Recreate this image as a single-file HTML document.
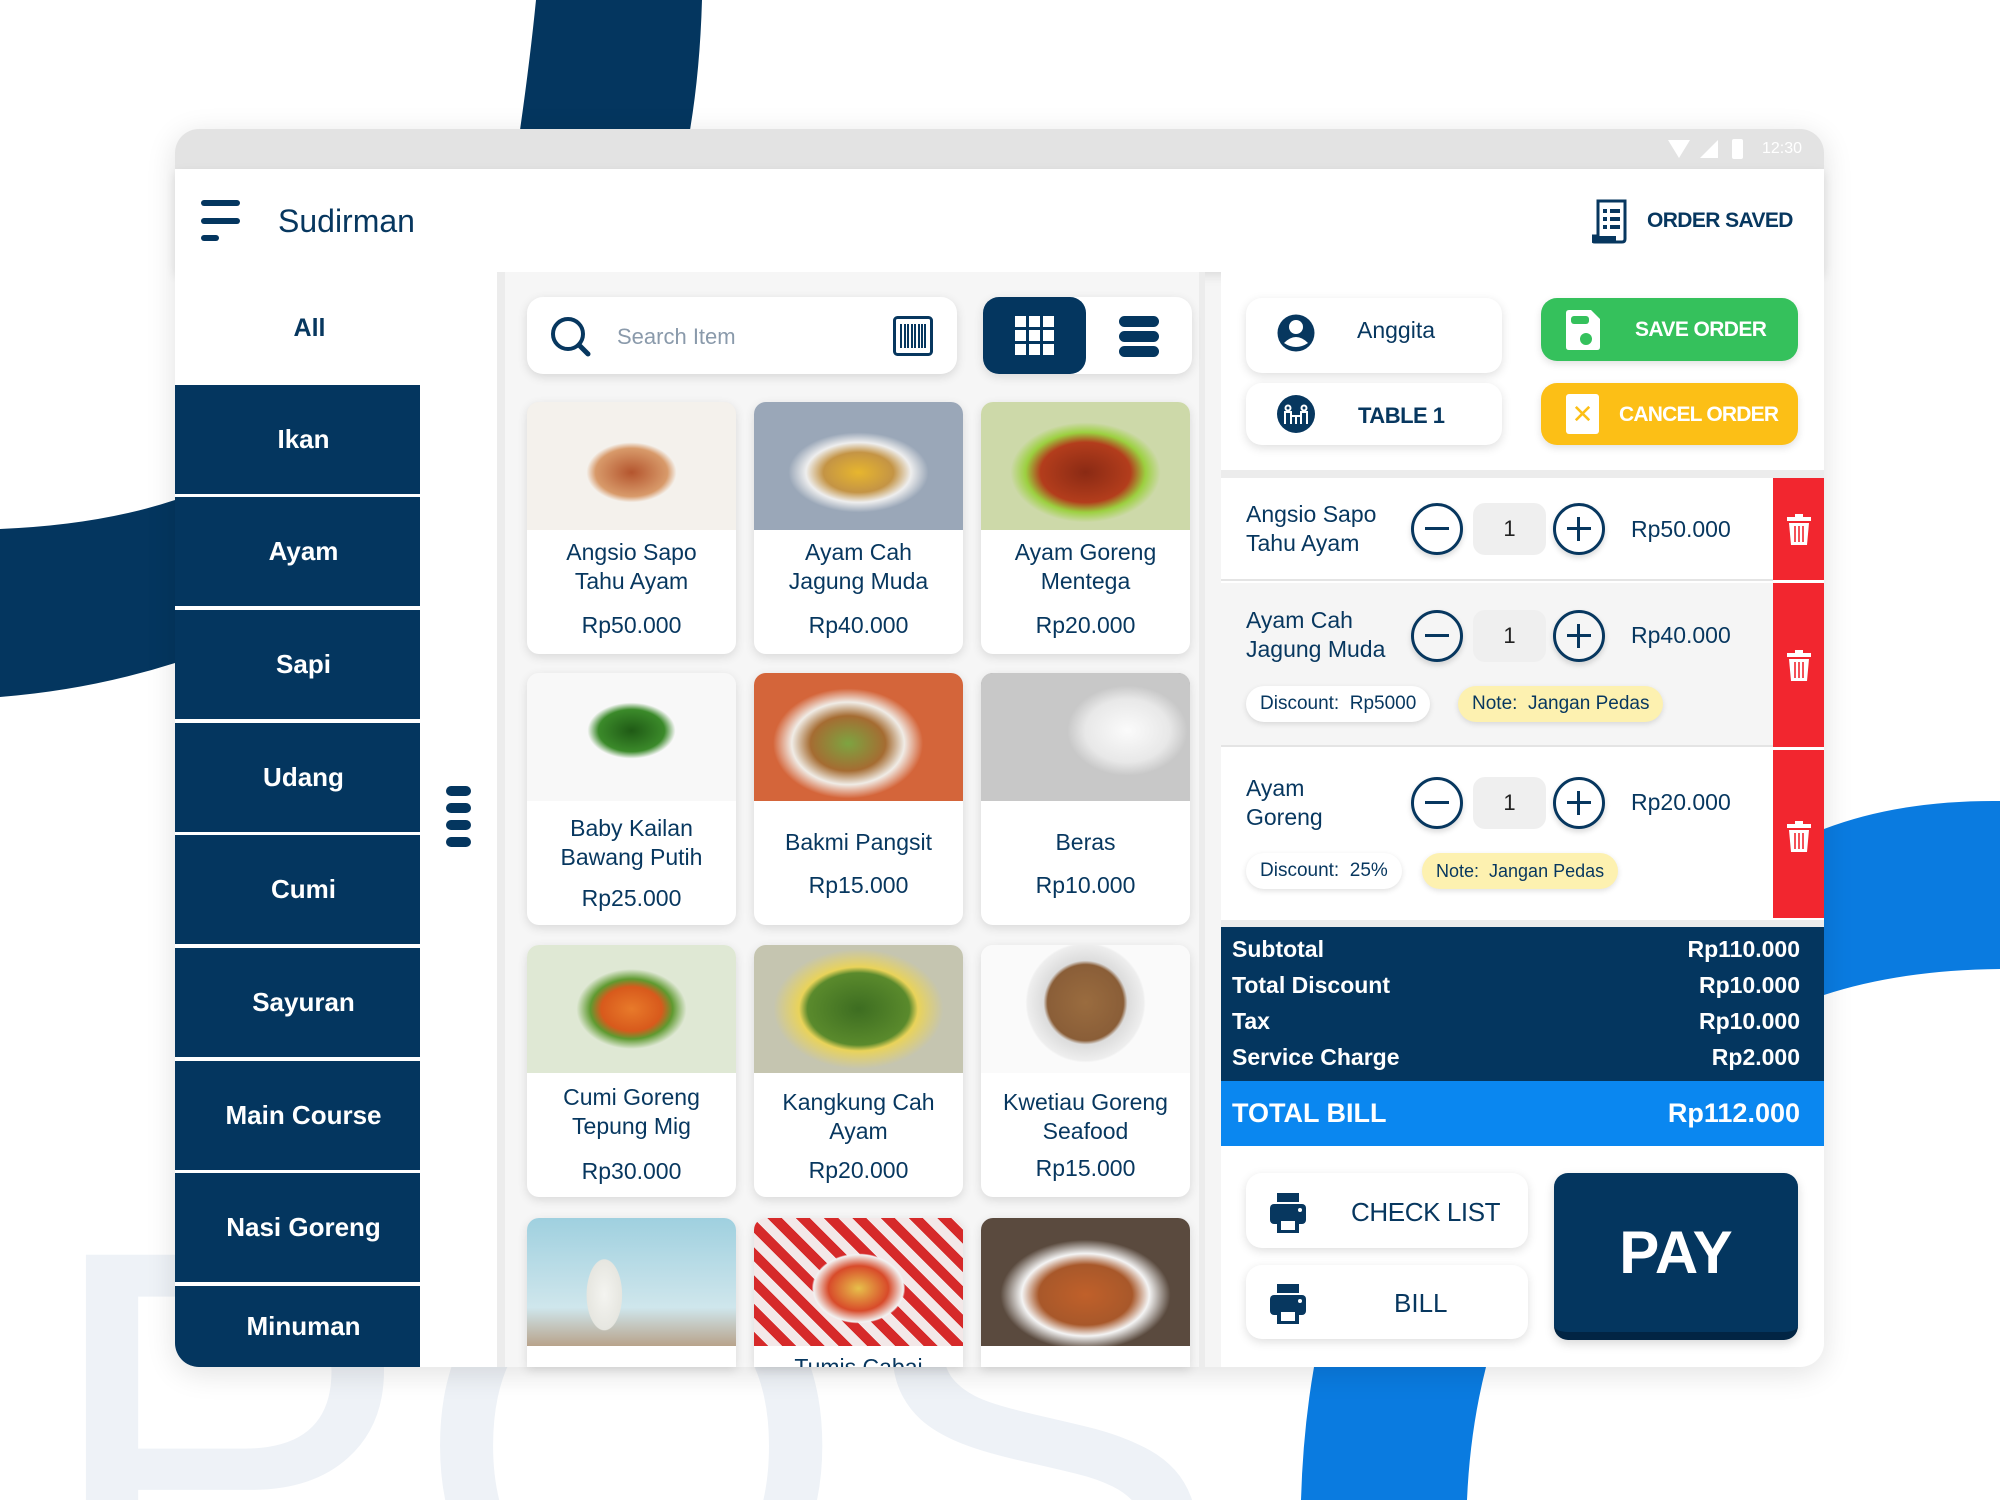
<!DOCTYPE html>
<html><head><meta charset="utf-8"><style>
*{box-sizing:border-box;margin:0;padding:0}
html,body{width:2000px;height:1500px;overflow:hidden}
body{position:relative;background:#fff;font-family:"Liberation Sans",sans-serif;color:#07375f}
.a{position:absolute}
.navy{background:#04365f}
.card{position:absolute;background:#fff;border-radius:12px;box-shadow:0 3px 10px rgba(0,0,0,.12);overflow:hidden;width:209px;height:252px}
.card .img{height:128px}
.card .t{position:absolute;left:0;right:0;text-align:center;font-size:23px;line-height:29px;color:#07375f}
.cat{position:absolute;left:175px;width:245px;height:109px;background:#04365f;color:#fff;font-size:26px;font-weight:bold;display:flex;align-items:center;justify-content:center;padding-left:12px}
.btn{position:absolute;background:#fff;border-radius:16px;box-shadow:0 3px 10px rgba(0,0,0,.13);display:flex;align-items:center}
.circ{position:absolute;width:52px;height:52px;border:3px solid #07375f;border-radius:50%;box-shadow:0 3px 6px rgba(0,0,0,.15)}
.circ:before{content:"";position:absolute;left:11px;top:21px;width:24px;height:3px;background:#07375f}
.plus:after{content:"";position:absolute;left:21px;top:11px;width:3px;height:24px;background:#07375f}
.qty{position:absolute;width:73px;height:52px;background:#efefef;border-radius:12px;text-align:center;line-height:52px;font-size:22px;color:#222}
.oname{position:absolute;left:1246px;font-size:23px;line-height:29px}
.price{position:absolute;left:1631px;font-size:23px}
.del{position:absolute;left:1773px;width:51px;background:#f2262f}
.tag{position:absolute;height:36px;border-radius:18px;font-size:19px;line-height:36px;padding:0 14px;box-shadow:0 2px 6px rgba(0,0,0,.12)}
.sum{position:absolute;left:1232px;width:568px;font-size:23px;font-weight:bold;color:#fff}
.sum span{float:right}
</style></head><body>
<svg class="a" style="left:0;top:0" width="2000" height="1500">
<path d="M536 0 L702 0 Q700 70 690 130 L520 130 Q530 60 536 0Z" fill="#04365f"/>
<path d="M0 529 Q100 525 175 500 L175 663 Q90 690 0 697Z" fill="#04365f"/>
<path d="M1824 829 Q1900 800 2000 801 L2000 969 Q1900 970 1824 995Z" fill="#0a7be0"/>
<path d="M1314 1367 L1486 1367 Q1470 1430 1467 1500 L1301 1500 Q1303 1430 1314 1367Z" fill="#0a7be0"/>
<text x="40" y="1640" font-size="560" fill="#eef2f7" font-family="Liberation Sans">POS</text>
</svg>
<div class="a" style="left:175px;top:129px;width:1649px;height:1238px;border-radius:24px;background:#f5f5f5;overflow:hidden;box-shadow:0 6px 30px rgba(0,0,0,.12)"></div>
<div class="a" style="left:175px;top:129px;width:1649px;height:40px;background:#e3e3e3;border-radius:24px 24px 0 0"></div>
<div class="a" style="left:1668px;top:140px;width:22px;height:18px;background:#fff;clip-path:polygon(0 0,100% 0,50% 100%)"></div>
<div class="a" style="left:1700px;top:140px;width:18px;height:18px;background:#fff;clip-path:polygon(100% 0,100% 100%,0 100%)"></div>
<div class="a" style="left:1732px;top:139px;width:11px;height:20px;background:#fff;border-radius:2px"></div>
<div class="a" style="left:1762px;top:140px;font-size:16px;color:#fff">12:30</div>
<div class="a" style="left:175px;top:169px;width:1649px;height:103px;background:#fff;box-shadow:0 4px 10px rgba(0,0,0,.1)"></div>
<div class="a navy" style="left:201px;top:200px;width:39px;height:6px;border-radius:3px"></div>
<div class="a navy" style="left:201px;top:218px;width:39px;height:6px;border-radius:3px"></div>
<div class="a navy" style="left:201px;top:235px;width:18px;height:6px;border-radius:3px"></div>
<div class="a" style="left:278px;top:203px;font-size:32px;color:#07375f">Sudirman</div>
<svg class="a" style="left:1592px;top:198px" width="36" height="46" viewBox="0 0 36 46"><path d="M6 3h27v38q0 3-3 3H3q-3 0-3-3v-3h6z" fill="none" stroke="#07375f" stroke-width="3"/><path d="M0 38h24v6H3q-3 0-3-3z" fill="#07375f"/><g fill="#07375f"><rect x="11" y="11" width="4" height="4"/><rect x="18" y="11" width="10" height="4"/><rect x="11" y="19" width="4" height="4"/><rect x="18" y="19" width="10" height="4"/><rect x="11" y="27" width="4" height="4"/><rect x="18" y="27" width="10" height="4"/></g></svg>
<div class="a" style="left:1647px;top:209px;font-size:21px;letter-spacing:-0.6px;font-weight:bold;color:#07375f">ORDER SAVED</div>
<!-- sidebar -->
<div class="a" style="left:175px;top:272px;width:330px;height:1095px;background:#fff;border-right:8px solid #ececec;border-radius:0 0 0 24px;overflow:hidden"></div>
<div class="a" style="left:187px;top:314px;width:245px;text-align:center;font-size:25px;font-weight:bold;color:#07375f">All</div>
<div class="cat" style="top:385px">Ikan</div>
<div class="cat" style="top:497px">Ayam</div>
<div class="cat" style="top:610px">Sapi</div>
<div class="cat" style="top:723px">Udang</div>
<div class="cat" style="top:835px">Cumi</div>
<div class="cat" style="top:948px">Sayuran</div>
<div class="cat" style="top:1061px">Main Course</div>
<div class="cat" style="top:1173px">Nasi Goreng</div>
<div class="cat" style="top:1286px;height:81px;border-radius:0 0 0 24px">Minuman</div>
<div class="a navy" style="left:446px;top:786px;width:25px;height:10px;border-radius:5px"></div>
<div class="a navy" style="left:446px;top:803px;width:25px;height:10px;border-radius:5px"></div>
<div class="a navy" style="left:446px;top:820px;width:25px;height:10px;border-radius:5px"></div>
<div class="a navy" style="left:446px;top:837px;width:25px;height:10px;border-radius:5px"></div>
<!-- product area -->
<div class="a" style="left:505px;top:272px;width:700px;height:1095px;background:#f6f6f6;border-right:6px solid #ececec"></div>
<div class="btn" style="left:527px;top:297px;width:430px;height:77px"></div>
<svg class="a" style="left:550px;top:316px" width="42" height="42"><circle cx="18" cy="18" r="15" fill="none" stroke="#07375f" stroke-width="4"/><path d="M29 29l9 9" stroke="#07375f" stroke-width="5" stroke-linecap="round"/></svg>
<div class="a" style="left:617px;top:324px;font-size:22px;color:#8a9aab">Search Item</div>
<svg class="a" style="left:893px;top:316px" width="40" height="40"><rect x="1.5" y="1.5" width="37" height="37" rx="3" fill="none" stroke="#07375f" stroke-width="3"/><g stroke="#07375f" stroke-width="2"><path d="M8 8v24M12 8v24M15 8v24M19 8v24M22 8v24M26 8v24M29 8v24M32 8v24"/></g></svg>
<div class="a" style="left:983px;top:297px;width:209px;height:77px;background:#fff;border-radius:16px;box-shadow:0 3px 10px rgba(0,0,0,.12)"></div>
<div class="a navy" style="left:983px;top:297px;width:103px;height:77px;border-radius:16px"></div>
<svg class="a" style="left:1015px;top:316px" width="40" height="40" fill="#fff"><rect x="0" y="0" width="11" height="11"/><rect x="14" y="0" width="11" height="11"/><rect x="28" y="0" width="11" height="11"/><rect x="0" y="14" width="11" height="11"/><rect x="14" y="14" width="11" height="11"/><rect x="28" y="14" width="11" height="11"/><rect x="0" y="28" width="11" height="11"/><rect x="14" y="28" width="11" height="11"/><rect x="28" y="28" width="11" height="11"/></svg>
<div class="a navy" style="left:1119px;top:316px;width:40px;height:11px;border-radius:6px"></div>
<div class="a navy" style="left:1119px;top:331px;width:40px;height:11px;border-radius:6px"></div>
<div class="a navy" style="left:1119px;top:346px;width:40px;height:11px;border-radius:6px"></div>

<div class="card" style="left:527px;top:402px"><div class="img" style="background:radial-gradient(ellipse 60px 40px at 50% 55%,#b4552e,#d89a6a 60%,#f4f1ec 75%),linear-gradient(#e9e4de,#c69c78)"></div><div class="t" style="top:136px">Angsio Sapo<br>Tahu Ayam</div><div class="t" style="top:209px">Rp50.000</div></div>
<div class="card" style="left:754px;top:402px"><div class="img" style="background:radial-gradient(ellipse 70px 40px at 50% 55%,#e7b62e,#c49445 50%,#eeeeee 75%,#9aa7b8)"></div><div class="t" style="top:136px">Ayam Cah<br>Jagung Muda</div><div class="t" style="top:209px">Rp40.000</div></div>
<div class="card" style="left:981px;top:402px"><div class="img" style="background:radial-gradient(ellipse 75px 50px at 50% 55%,#8a2a14,#b33d1c 60%,#9cd040 80%,#cdd9a9)"></div><div class="t" style="top:136px">Ayam Goreng<br>Mentega</div><div class="t" style="top:209px">Rp20.000</div></div>
<div class="card" style="left:527px;top:673px"><div class="img" style="background:radial-gradient(ellipse 55px 35px at 50% 45%,#1f5a15,#3b8a2a 60%,#f8f8f8 80%),#efefef"></div><div class="t" style="top:141px">Baby Kailan<br>Bawang Putih</div><div class="t" style="top:211px">Rp25.000</div></div>
<div class="card" style="left:754px;top:673px"><div class="img" style="background:radial-gradient(ellipse 75px 55px at 45% 55%,#7da441,#a56c32 50%,#f0ece6 75%,#d4653a)"></div><div class="t" style="top:155px">Bakmi Pangsit</div><div class="t" style="top:198px">Rp15.000</div></div>
<div class="card" style="left:981px;top:673px"><div class="img" style="background:radial-gradient(ellipse 60px 45px at 70% 45%,#fbfbfb,#e8e8e8 70%,#c8c8c8),#8c8c8c"></div><div class="t" style="top:155px">Beras</div><div class="t" style="top:198px">Rp10.000</div></div>
<div class="card" style="left:527px;top:945px"><div class="img" style="background:radial-gradient(ellipse 55px 40px at 50% 50%,#e87a2a,#d85a1c 55%,#5f9a30 75%,#dfe8d4)"></div><div class="t" style="top:138px">Cumi Goreng<br>Tepung Mig</div><div class="t" style="top:212px">Rp30.000</div></div>
<div class="card" style="left:754px;top:945px"><div class="img" style="background:radial-gradient(ellipse 85px 60px at 50% 50%,#3d6d21,#5a8a2c 60%,#e9d35a 70%,#c5c5b0)"></div><div class="t" style="top:143px">Kangkung Cah<br>Ayam</div><div class="t" style="top:211px">Rp20.000</div></div>
<div class="card" style="left:981px;top:945px"><div class="img" style="background:radial-gradient(circle at 50% 45%,#9a6c3f 0,#8a5e38 38px,#dcdcdc 42px,#eeeeee 58px,#fafafa 60px)"></div><div class="t" style="top:143px">Kwetiau Goreng<br>Seafood</div><div class="t" style="top:209px">Rp15.000</div></div>
<div class="card" style="left:527px;top:1218px;height:149px;border-radius:12px 12px 0 0"><div class="img" style="background:radial-gradient(ellipse 25px 50px at 37% 60%,#f4f4f0,#e6e6e0 70%,transparent 72%),linear-gradient(#9fd0df,#cfe6ec 70%,#b8a38b)"></div></div>
<div class="card" style="left:754px;top:1218px;height:149px;border-radius:12px 12px 0 0"><div class="img" style="background:radial-gradient(ellipse 60px 45px at 50% 55%,#e7c04b,#d84b2a 50%,#f2f2f2 75%,transparent 78%),repeating-linear-gradient(45deg,#d62a2a 0 10px,#f3e8e8 10px 20px)"></div><div class="t" style="top:135px">Tumis Cabai</div></div>
<div class="card" style="left:981px;top:1218px;height:149px;border-radius:12px 12px 0 0"><div class="img" style="background:radial-gradient(ellipse 85px 55px at 50% 60%,#c0602a,#a8582a 55%,#f4f4f4 75%,#5a4a3e)"></div></div>

<!-- right panel -->
<div class="a" style="left:1221px;top:272px;width:603px;height:1095px;background:#fff;border-radius:0 0 24px 0"></div>
<div class="a" style="left:1221px;top:470px;width:603px;height:8px;background:#ececec"></div>
<div class="btn" style="left:1246px;top:298px;width:256px;height:75px"></div>
<svg class="a" style="left:1276px;top:310px" width="40" height="46"><circle cx="20" cy="23" r="18.5" fill="#07375f"/><circle cx="20" cy="17" r="7" fill="#fff"/><path d="M8 33q12-12 24 0q-12 8-24 0z" fill="#fff"/></svg>
<div class="a" style="left:1357px;top:317px;font-size:23px;color:#07375f">Anggita</div>
<div class="btn" style="left:1246px;top:383px;width:256px;height:62px"></div>
<svg class="a" style="left:1276px;top:394px" width="40" height="40"><circle cx="20" cy="20" r="19" fill="#07375f"/><g stroke="#fff" stroke-width="2" fill="none"><circle cx="12" cy="14" r="2.5"/><circle cx="28" cy="14" r="2.5"/><path d="M9 30v-12h6v12M25 30v-12h6v12M15 22h10M20 22v8"/></g></svg>
<div class="a" style="left:1358px;top:403px;font-size:22px;letter-spacing:-0.5px;font-weight:bold;color:#07375f">TABLE 1</div>
<div class="a" style="left:1541px;top:298px;width:257px;height:63px;background:#35c15c;border-radius:16px;box-shadow:0 3px 8px rgba(0,0,0,.12)"></div>
<svg class="a" style="left:1566px;top:310px" width="34" height="40"><path d="M0 3q0-3 3-3h22l9 9v28q0 3-3 3H3q-3 0-3-3z" fill="#fff"/><rect x="5" y="6" width="18" height="8" rx="3" fill="#35c15c"/><circle cx="20" cy="29" r="6" fill="#35c15c"/></svg>
<div class="a" style="left:1635px;top:318px;font-size:21px;letter-spacing:-0.6px;font-weight:bold;color:#fff">SAVE ORDER</div>
<div class="a" style="left:1541px;top:383px;width:257px;height:62px;background:#fcbf16;border-radius:16px;box-shadow:0 3px 8px rgba(0,0,0,.12)"></div>
<div class="a" style="left:1566px;top:394px;width:33px;height:40px;background:#fff;border-radius:3px;color:#fcbf16;font-size:26px;text-align:center;line-height:40px">✕</div>
<div class="a" style="left:1619px;top:403px;font-size:21px;letter-spacing:-0.8px;font-weight:bold;color:#fff">CANCEL ORDER</div>

<div class="a" style="left:1221px;top:478px;width:552px;height:103px;background:#fff;border-bottom:2px solid #e4e4e4"></div>
<div class="a" style="left:1221px;top:583px;width:552px;height:164px;background:#f5f5f5;border-bottom:2px solid #e4e4e4"></div>
<div class="a" style="left:1221px;top:750px;width:552px;height:170px;background:#fff"></div>
<div class="del" style="top:478px;height:102px"></div>
<div class="del" style="top:583px;height:164px"></div>
<div class="del" style="top:750px;height:168px"></div>
<svg class="a" style="left:1787px;top:514px" width="24" height="32"><g fill="#fff"><rect x="0" y="3" width="24" height="4"/><rect x="8" y="0" width="8" height="3"/><path d="M2 9h20l-2 22H4z"/></g><g stroke="#f2262f" stroke-width="1.6"><path d="M8 12v16M12 12v16M16 12v16"/></g></svg>
<svg class="a" style="left:1787px;top:650px" width="24" height="32"><g fill="#fff"><rect x="0" y="3" width="24" height="4"/><rect x="8" y="0" width="8" height="3"/><path d="M2 9h20l-2 22H4z"/></g><g stroke="#f2262f" stroke-width="1.6"><path d="M8 12v16M12 12v16M16 12v16"/></g></svg>
<svg class="a" style="left:1787px;top:821px" width="24" height="32"><g fill="#fff"><rect x="0" y="3" width="24" height="4"/><rect x="8" y="0" width="8" height="3"/><path d="M2 9h20l-2 22H4z"/></g><g stroke="#f2262f" stroke-width="1.6"><path d="M8 12v16M12 12v16M16 12v16"/></g></svg>

<div class="oname" style="top:500px">Angsio Sapo<br>Tahu Ayam</div>
<div class="circ" style="left:1411px;top:503px"></div><div class="qty" style="left:1473px;top:503px">1</div><div class="circ plus" style="left:1553px;top:503px"></div>
<div class="price" style="top:516px">Rp50.000</div>

<div class="oname" style="top:606px">Ayam Cah<br>Jagung Muda</div>
<div class="circ" style="left:1411px;top:610px"></div><div class="qty" style="left:1473px;top:610px">1</div><div class="circ plus" style="left:1553px;top:610px"></div>
<div class="price" style="top:622px">Rp40.000</div>
<div class="tag" style="left:1246px;top:686px;background:#fff;color:#07375f">Discount:&nbsp; Rp5000</div>
<div class="tag" style="left:1458px;top:686px;background:#fdf1b0;color:#07375f">Note:&nbsp; Jangan Pedas</div>

<div class="oname" style="top:774px">Ayam<br>Goreng</div>
<div class="circ" style="left:1411px;top:777px"></div><div class="qty" style="left:1473px;top:777px">1</div><div class="circ plus" style="left:1553px;top:777px"></div>
<div class="price" style="top:789px">Rp20.000</div>
<div class="tag" style="left:1246px;top:853px;background:#fff;color:#07375f">Discount:&nbsp; 25%</div>
<div class="tag" style="left:1422px;top:853px;background:#fdf1b0;color:#07375f;font-size:18px">Note:&nbsp; Jangan Pedas</div>

<div class="a" style="left:1221px;top:920px;width:603px;height:8px;background:#ececec"></div>
<div class="a navy" style="left:1221px;top:927px;width:603px;height:154px"></div>
<div class="sum" style="top:936px">Subtotal<span>Rp110.000</span></div>
<div class="sum" style="top:972px">Total Discount<span>Rp10.000</span></div>
<div class="sum" style="top:1008px">Tax<span>Rp10.000</span></div>
<div class="sum" style="top:1044px">Service Charge<span>Rp2.000</span></div>
<div class="a" style="left:1221px;top:1081px;width:603px;height:65px;background:#0a87f0"></div>
<div class="sum" style="top:1098px;font-size:27px">TOTAL BILL<span>Rp112.000</span></div>

<div class="btn" style="left:1246px;top:1173px;width:282px;height:75px"></div>
<svg class="a" style="left:1270px;top:1193px" width="36" height="40"><g fill="#07375f"><rect x="7" y="0" width="22" height="9"/><rect x="0" y="11" width="36" height="20" rx="4"/><rect x="7" y="26" width="22" height="14"/></g><rect x="11" y="28" width="14" height="9" fill="#fff"/><circle cx="30" cy="17" r="2" fill="#fff"/></svg>
<div class="a" style="left:1351px;top:1197px;font-size:26px;letter-spacing:-0.4px;color:#07375f">CHECK LIST</div>
<div class="btn" style="left:1246px;top:1265px;width:282px;height:74px"></div>
<svg class="a" style="left:1270px;top:1284px" width="36" height="40"><g fill="#07375f"><rect x="7" y="0" width="22" height="9"/><rect x="0" y="11" width="36" height="20" rx="4"/><rect x="7" y="26" width="22" height="14"/></g><rect x="11" y="28" width="14" height="9" fill="#fff"/><circle cx="30" cy="17" r="2" fill="#fff"/></svg>
<div class="a" style="left:1394px;top:1288px;font-size:26px;color:#07375f">BILL</div>
<div class="a" style="left:1554px;top:1173px;width:244px;height:167px;background:#04365f;border-radius:14px;border-bottom:8px solid #022544;box-shadow:0 4px 10px rgba(0,0,0,.15)"></div>
<div class="a" style="left:1554px;top:1218px;width:244px;text-align:center;font-size:60px;font-weight:bold;color:#fff">PAY</div>
</body></html>
